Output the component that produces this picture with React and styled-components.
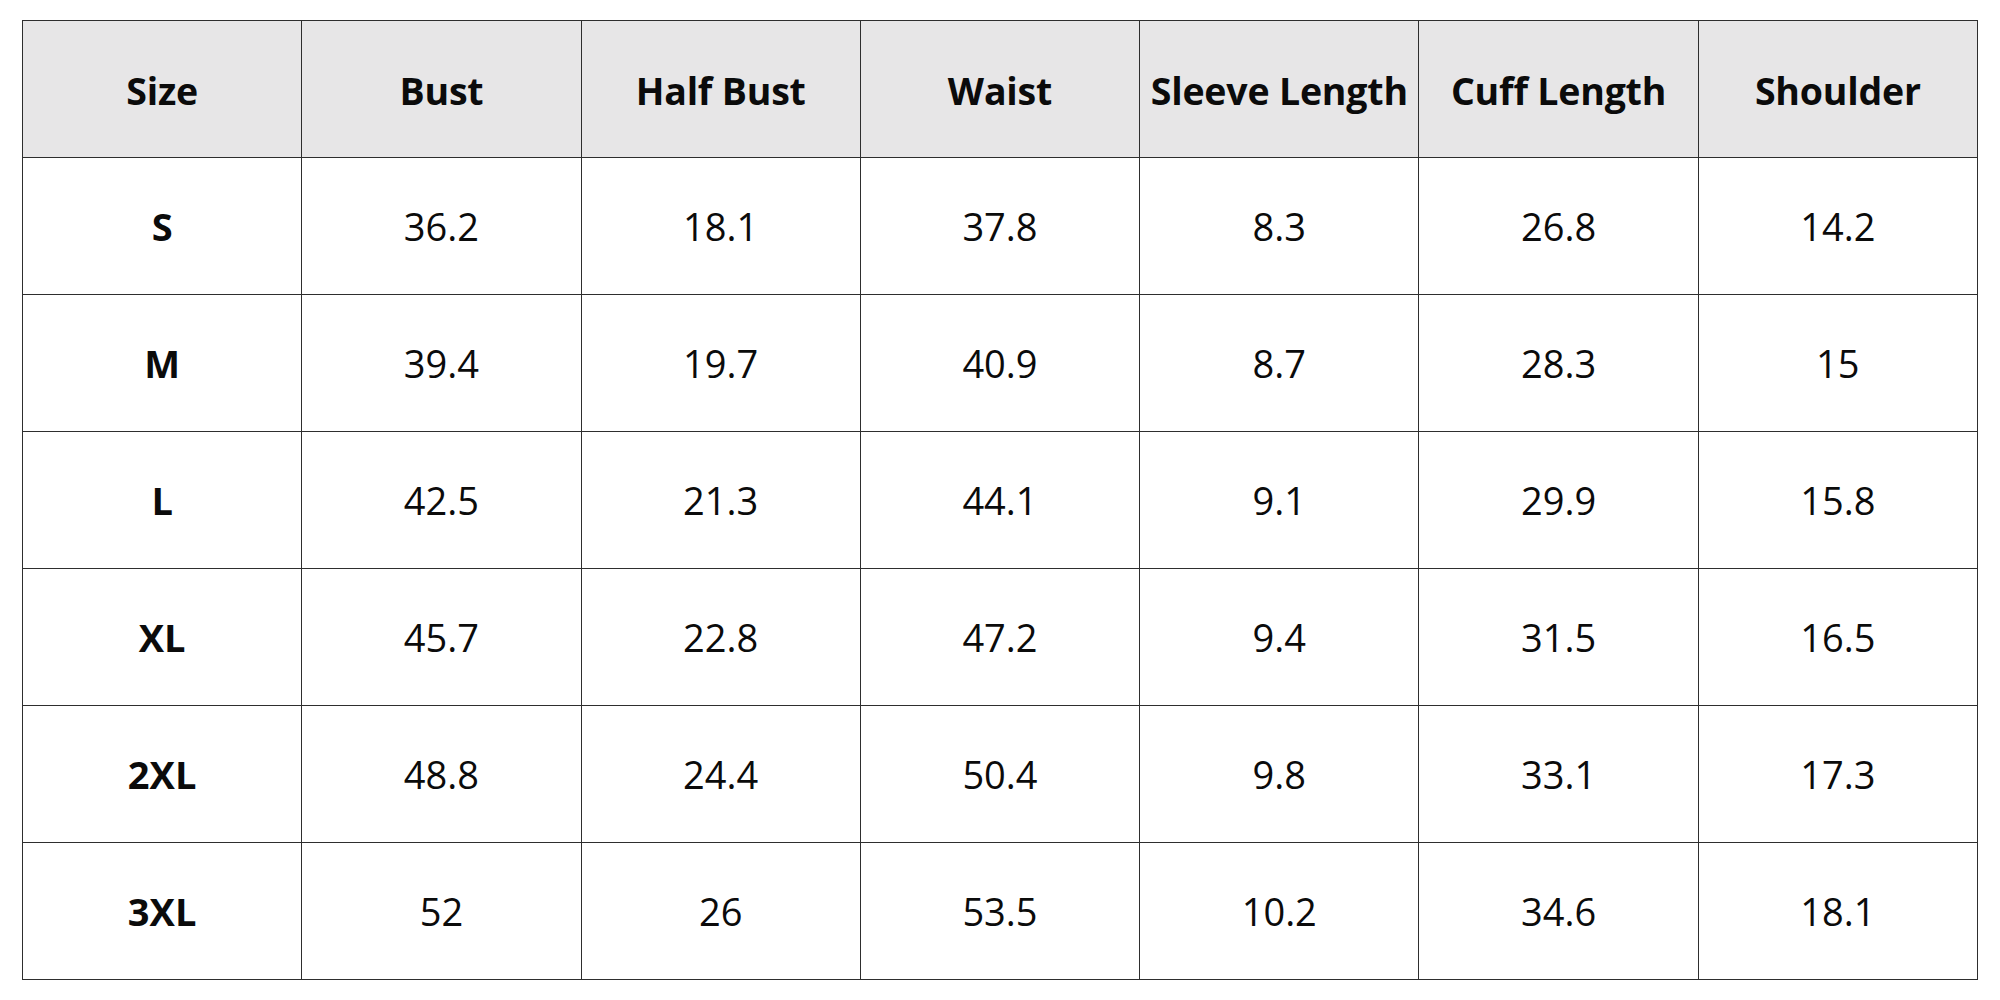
import React from "react";
import styled, { createGlobalStyle } from "styled-components";

const Global = createGlobalStyle`
  html, body { margin: 0; padding: 0; background: #ffffff; }
  body { font-family: "Open Sans", "Liberation Sans", sans-serif; color: #0b0b0b; }
`;

const Page = styled.div`
  padding: 20px 0 0 22px;
  width: 2000px;
  height: 1000px;
  box-sizing: border-box;
`;

const Table = styled.table`
  width: 1956px;
  table-layout: fixed;
  border-collapse: collapse;
  border: 1.5px solid #1c1c1c;
`;

const Row = styled.tr`
  height: 137px;
`;

const HeadCell = styled.th`
  padding: 2px 0 0 0;
  background: #e7e6e7;
  border: 1px solid #2e2e2e;
  font-size: 37.5px;
  line-height: 1.2;
  font-weight: 700;
  text-align: center;
  vertical-align: middle;
  white-space: nowrap;
  letter-spacing: -0.2px;
`;

const Cell = styled.td`
  padding: 2px 0 0 0;
  border: 1px solid #2e2e2e;
  font-size: 38px;
  line-height: 1.2;
  font-weight: ${(p) => (p.$bold ? 700 : 400)};
  text-align: center;
  vertical-align: middle;
`;

const headers = ["Size", "Bust", "Half Bust", "Waist", "Sleeve Length", "Cuff Length", "Shoulder"];
const rows = [
  ["S", "36.2", "18.1", "37.8", "8.3", "26.8", "14.2"],
  ["M", "39.4", "19.7", "40.9", "8.7", "28.3", "15"],
  ["L", "42.5", "21.3", "44.1", "9.1", "29.9", "15.8"],
  ["XL", "45.7", "22.8", "47.2", "9.4", "31.5", "16.5"],
  ["2XL", "48.8", "24.4", "50.4", "9.8", "33.1", "17.3"],
  ["3XL", "52", "26", "53.5", "10.2", "34.6", "18.1"],
];

export default function App() {
  return (
    <>
      <Global />
      <Page>
        <Table>
          <thead>
            <Row>
              {headers.map((h) => (
                <HeadCell key={h}>{h}</HeadCell>
              ))}
            </Row>
          </thead>
          <tbody>
            {rows.map((r) => (
              <Row key={r[0]}>
                {r.map((v, i) => (
                  <Cell key={i} $bold={i === 0}>
                    {v}
                  </Cell>
                ))}
              </Row>
            ))}
          </tbody>
        </Table>
      </Page>
    </>
  );
}
